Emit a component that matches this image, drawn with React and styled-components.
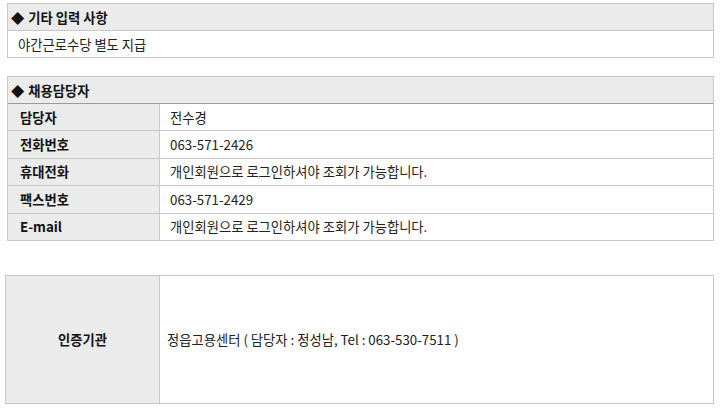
import React from "react";
import styled, { createGlobalStyle } from "styled-components";

const Global = createGlobalStyle`
  html, body { margin: 0; padding: 0; background: #fff; }
  body { font-family: "Noto Sans CJK KR", "Noto Sans", sans-serif; color: #222; font-size: 13.3px; }
`;

const Page = styled.div`
  width: 723px;
  padding-top: 3px;
  box-sizing: border-box;
`;

const Section = styled.section`
  margin: ${p => p.$margin || "0"};
  width: ${p => p.$width || "707px"};
  border: 1px solid #c8c8c8;
  box-sizing: border-box;
`;

const Header = styled.div`
  height: 26px;
  background: #ebebeb;
  border-bottom: 1px solid ${p => (p.$dark ? "#9a9a9a" : "#c8c8c8")};
  display: flex;
  align-items: center;
  padding-left: 3px;
  font-weight: 700;
  color: #111;
`;

const Diamond = styled.span`
  margin-right: 4px;
`;

const PlainRow = styled.div`
  height: 26px;
  display: flex;
  align-items: center;
  padding-left: 10px;
`;

const InfoGrid = styled.div`
  display: grid;
  grid-template-columns: 152px 1fr;
`;

const Label = styled.div`
  background: #ebebeb;
  border-right: 1px solid #c8c8c8;
  border-bottom: ${p => (p.$last ? "none" : "1px solid #c8c8c8")};
  height: 26.4px;
  display: flex;
  align-items: center;
  padding-left: 12px;
  font-weight: 700;
  color: #111;
`;

const Value = styled.div`
  border-bottom: ${p => (p.$last ? "none" : "1px solid #c8c8c8")};
  height: 26.4px;
  display: flex;
  align-items: center;
  padding-left: 10px;
`;

const CertGrid = styled.div`
  display: grid;
  grid-template-columns: 154px 1fr;
  height: 127px;
`;

const CertLabel = styled.div`
  background: #ebebeb;
  border-right: 1px solid #c8c8c8;
  display: flex;
  align-items: center;
  justify-content: center;
  font-weight: 700;
  color: #111;
`;

const CertValue = styled.div`
  display: flex;
  align-items: center;
  padding-left: 7px;
`;

const rows = [
  ["담당자", "전수경"],
  ["전화번호", "063-571-2426"],
  ["휴대전화", "개인회원으로 로그인하셔야 조회가 가능합니다."],
  ["팩스번호", "063-571-2429"],
  ["E-mail", "개인회원으로 로그인하셔야 조회가 가능합니다."],
];

export default function App() {
  return (
    <>
      <Global />
      <Page>
        <Section $margin="0 0 0 7px">
          <Header>
            <Diamond>◆</Diamond>기타 입력 사항
          </Header>
          <PlainRow>야간근로수당 별도 지급</PlainRow>
        </Section>

        <Section $margin="18px 0 0 7px" $width="707px">
          <Header $dark>
            <Diamond>◆</Diamond>채용담당자
          </Header>
          <InfoGrid>
            {rows.map(([k, v], i) => (
              <React.Fragment key={k}>
                <Label $last={i === rows.length - 1}>{k}</Label>
                <Value $last={i === rows.length - 1}>{v}</Value>
              </React.Fragment>
            ))}
          </InfoGrid>
        </Section>

        <Section $margin="34px 0 0 5px" $width="709px">
          <CertGrid>
            <CertLabel>인증기관</CertLabel>
            <CertValue>정읍고용센터 ( 담당자 : 정성남, Tel : 063-530-7511 )</CertValue>
          </CertGrid>
        </Section>
      </Page>
    </>
  );
}
